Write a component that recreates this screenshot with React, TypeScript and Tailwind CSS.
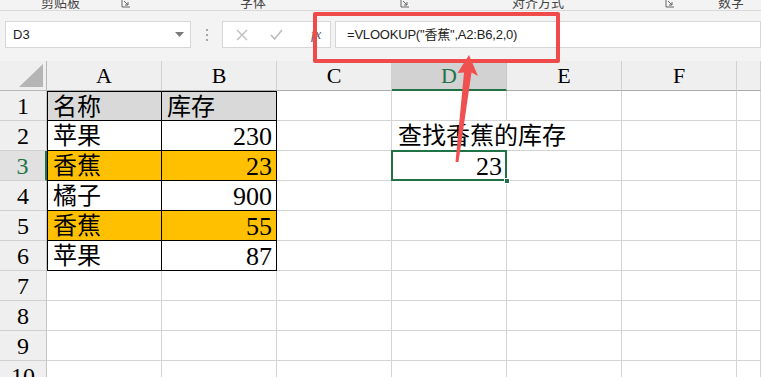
import React from "react";

type Cell = { text?: string; right?: boolean; bg?: string };

const COLS = ["A", "B", "C", "D", "E", "F", "G"];

const data: Record<number, Record<string, Cell>> = {
  1: { A: { text: "名称", bg: "bg-[#d9d9d9]" }, B: { text: "库存", bg: "bg-[#d9d9d9]" } },
  2: { A: { text: "苹果" }, B: { text: "230", right: true }, D: { text: "查找香蕉的库存" } },
  3: { A: { text: "香蕉", bg: "bg-[#ffc000]" }, B: { text: "23", right: true, bg: "bg-[#ffc000]" }, D: { text: "23", right: true } },
  4: { A: { text: "橘子" }, B: { text: "900", right: true } },
  5: { A: { text: "香蕉", bg: "bg-[#ffc000]" }, B: { text: "55", right: true, bg: "bg-[#ffc000]" } },
  6: { A: { text: "苹果" }, B: { text: "87", right: true } },
};

function Launcher() {
  return (
    <svg width="10" height="10" viewBox="0 0 10 10" className="-mt-[2px]">
      <path d="M1 1 V9 H9" fill="none" stroke="#666" strokeWidth="1" />
      <path d="M3 3 L7 7 M7 4 V7 H4" fill="none" stroke="#666" strokeWidth="1" />
    </svg>
  );
}

function RibbonStrip() {
  const label = "text-[13px] leading-[13px] -mt-[5px] text-[#444] font-['Noto_Sans_CJK_SC',sans-serif]";
  return (
    <div className="h-[11px] bg-[#f3f3f3] border-b border-[#d9d9d9] overflow-hidden flex">
      <span className={`${label} ml-[41px] w-[80px]`}>剪贴板</span>
      <span className="w-[119px]"><Launcher /></span>
      <span className={`${label} w-[160px]`}>字体</span>
      <span className="w-[112px]"><Launcher /></span>
      <span className={`${label} w-[153px]`}>对齐方式</span>
      <span className="w-[53px]"><Launcher /></span>
      <span className={label}>数字</span>
    </div>
  );
}

function FormulaBar() {
  return (
    <div className="h-[50px] bg-[#f3f3f3] flex items-start pt-[10px] font-['Liberation_Sans','Noto_Sans_CJK_SC',sans-serif]">
      <div className="ml-[5px] w-[186px] h-[27px] bg-white border border-[#d6d6d6] flex items-center justify-between pl-[7px] pr-[6px]">
        <span className="text-[13px] text-[#222]">D3</span>
        <svg width="9" height="5" viewBox="0 0 9 5">
          <path d="M0 0 H9 L4.5 5 Z" fill="#7a7a7a" />
        </svg>
      </div>
      <div className="w-[31px] h-[27px] flex flex-col items-center justify-center gap-[3px]">
        <span className="w-[2px] h-[2px] bg-[#a6a6a6]" />
        <span className="w-[2px] h-[2px] bg-[#a6a6a6]" />
        <span className="w-[2px] h-[2px] bg-[#a6a6a6]" />
      </div>
      <div className="w-[109px] h-[27px] bg-white border border-[#d6d6d6] flex items-center">
        <svg width="12" height="12" viewBox="0 0 12 12" className="ml-[13px]">
          <path d="M1 1 L11 11 M11 1 L1 11" stroke="#bdbdbd" strokeWidth="1.4" />
        </svg>
        <svg width="13" height="11" viewBox="0 0 13 11" className="ml-[22px]">
          <path d="M1 6 L4.5 10 L12 1" fill="none" stroke="#bdbdbd" strokeWidth="1.6" />
        </svg>
        <span className="ml-[28px] text-[14px] italic text-[#555] font-['Liberation_Serif',serif]">fx</span>
      </div>
      <div className="ml-[4px] flex-1 h-[27px] bg-white border border-[#d6d6d6] flex items-center pl-[11px]">
        <span className="text-[13px] text-[#222] tracking-[-0.2px]">=VLOOKUP("香蕉",A2:B6,2,0)</span>
      </div>
    </div>
  );
}

function Grid() {
  const rows = Array.from({ length: 10 }, (_, i) => i + 1);
  return (
    <div className="grid grid-cols-[47px_115px_115px_115px_115px_115px_115px_1fr] auto-rows-[30px] font-['Liberation_Serif','Noto_Sans_CJK_SC',serif] text-black">
      <div className="bg-[#efefef] border-r border-b border-[#b8b8b8] flex items-end justify-end pr-[3px] pb-[3px]">
        <svg width="24" height="23" viewBox="0 0 24 23">
          <path d="M0 23 L24 0 V23 Z" fill="#b5b5b5" />
        </svg>
      </div>
      {COLS.map((c) =>
        c === "D" ? (
          <div key={c} className="bg-[#d2d2d2] border-r border-[#c8c8c8] border-b-2 border-b-[#217346] flex items-center justify-center text-[22px] text-[#217346]">
            {c}
          </div>
        ) : (
          <div key={c} className="bg-[#efefef] border-r border-[#d0d0d0] border-b border-b-[#ababab] flex items-center justify-center text-[22px]">
            {c === "G" ? "" : c}
          </div>
        )
      )}
      {rows.map((r) => (
        <React.Fragment key={r}>
          {r === 3 ? (
            <div className="bg-[#e1e1e1] border-b border-[#d0d0d0] border-r-2 border-r-[#217346] flex items-center justify-center text-[24px] text-[#217346]">
              {r}
            </div>
          ) : (
            <div className="bg-[#efefef] border-b border-[#d0d0d0] border-r border-r-[#c4c4c4] flex items-center justify-center text-[24px]">
              {r}
            </div>
          )}
          {COLS.map((c) => {
            const cell = data[r]?.[c];
            const inTable = (c === "A" || c === "B") && r <= 6;
            const spill = r === 2 && c === "D";
            const selected = r === 3 && c === "D";
            const border = inTable
              ? `border-r border-b border-black ${c === "A" ? "border-l" : ""} ${r === 1 ? "border-t" : ""}`
              : spill
              ? "border-b border-[#d4d4d4]"
              : "border-r border-b border-[#d4d4d4]";
            return (
              <div
                key={c}
                className={`relative flex items-center whitespace-nowrap ${border} ${cell?.bg ?? "bg-white"} ${
                  cell?.right ? "justify-end pr-[4px]" : c === "D" ? "pl-[6px]" : "pl-[5px]"
                } ${spill || selected ? "z-10 overflow-visible" : ""}`}
              >
                {cell?.text && (
                  <span className={cell.right ? "text-[26px] leading-[30px] pt-[3px]" : "text-[24px] leading-[30px] pt-[1px]"}>
                    {cell.text}
                  </span>
                )}
                {selected && (
                  <>
                    <span className="absolute -left-[1px] -top-[1px] -right-[1px] -bottom-[1px] border-2 border-[#217346]" />
                    <span className="absolute -right-[4px] -bottom-[4px] w-[6px] h-[6px] bg-[#217346] border border-white" />
                  </>
                )}
              </div>
            );
          })}
        </React.Fragment>
      ))}
    </div>
  );
}

export default function App() {
  return (
    <div className="relative w-[761px] h-[377px] overflow-hidden bg-white">
      <RibbonStrip />
      <FormulaBar />
      <Grid />
      {/* annotation overlay */}
      <div className="absolute z-20 left-[313px] top-[12px] w-[247px] h-[51px] border-4 border-[#ef4b4b] rounded-[2px]" />
      <svg className="absolute z-20 left-0 top-0" width="761" height="377" viewBox="0 0 761 377">
        <path
          d="M469 55 L478 76 L471.5 72.5 L458.5 162 L455.5 162 L464 72.5 L457.5 73 Z"
          fill="#f05050"
        />
      </svg>
    </div>
  );
}
